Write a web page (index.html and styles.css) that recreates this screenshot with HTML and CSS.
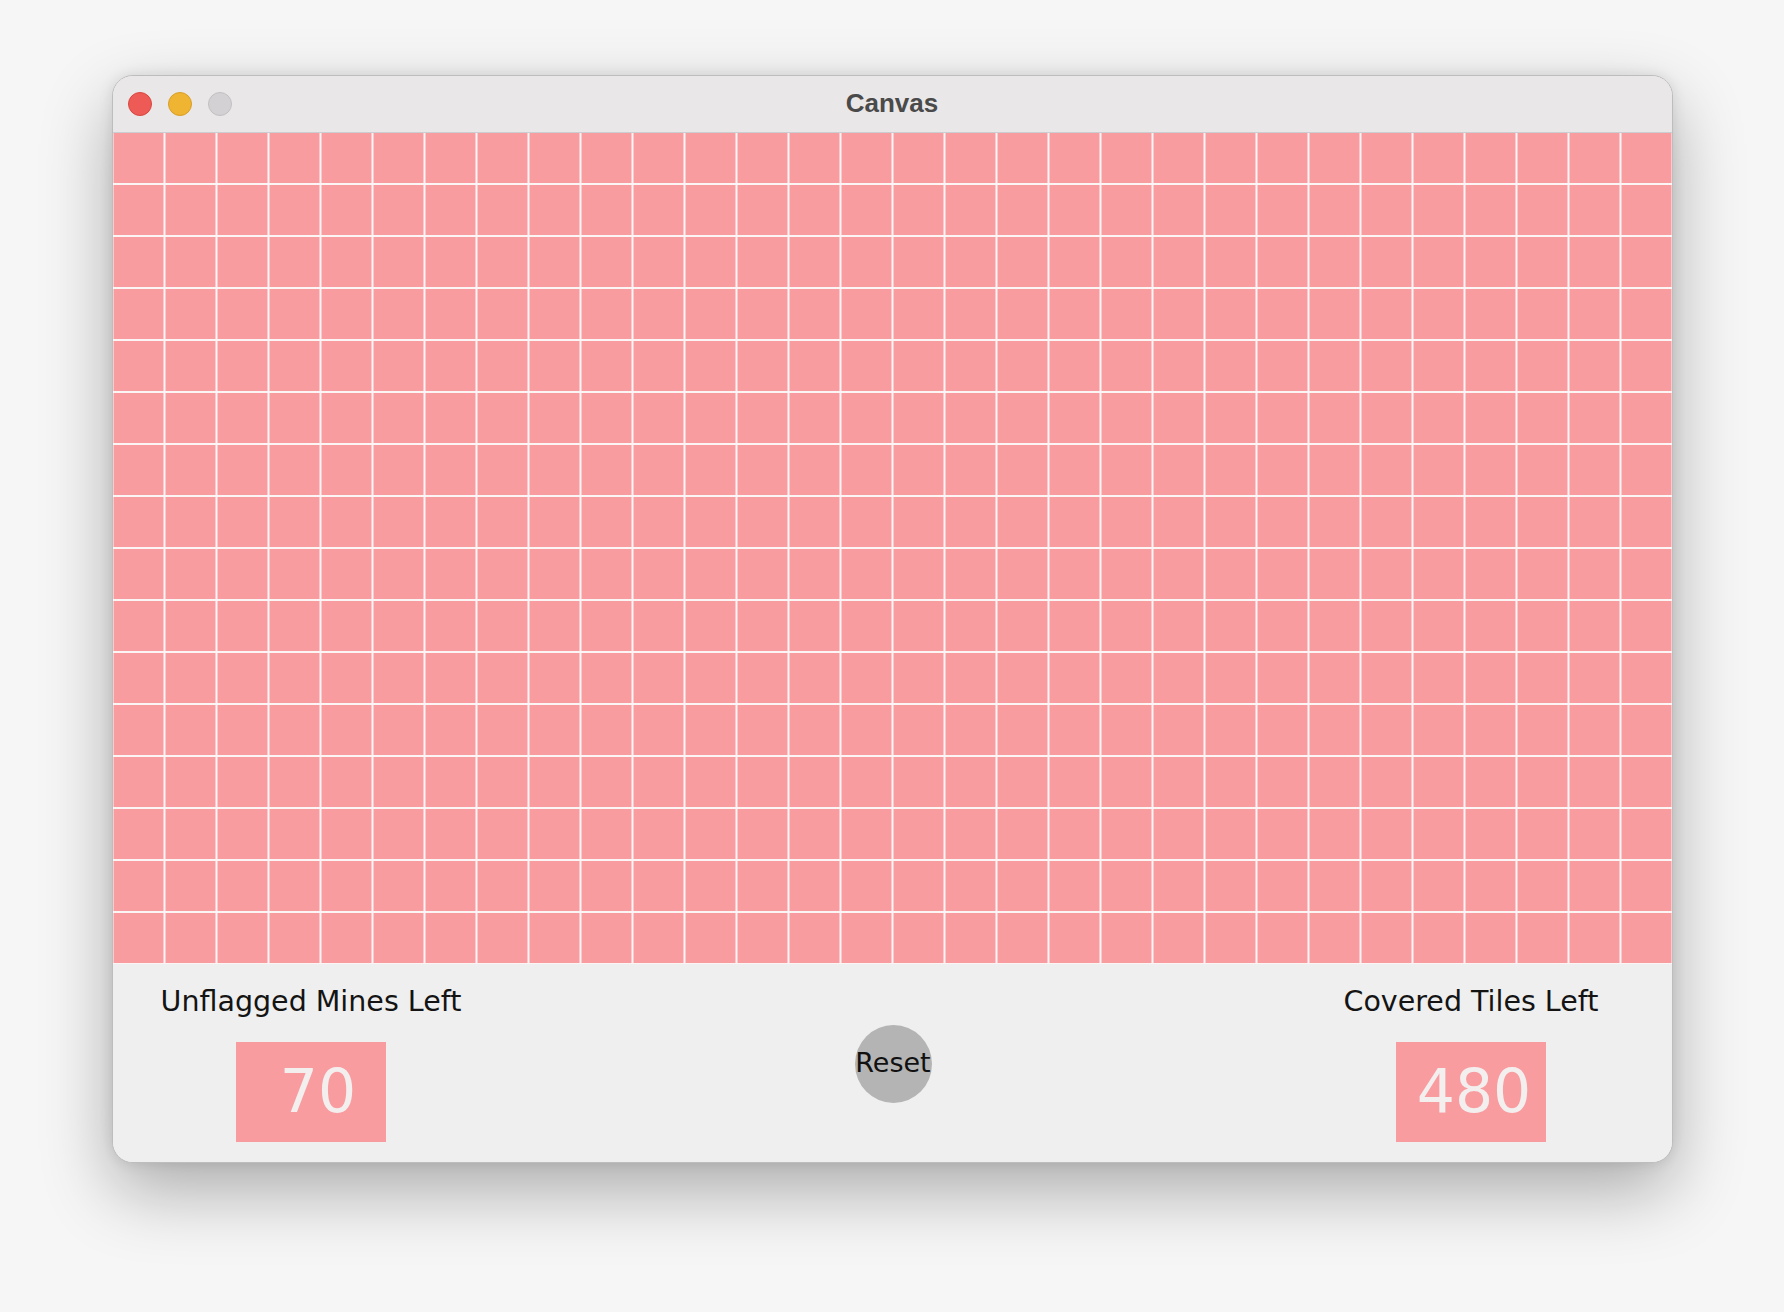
FILE: index.html
```html
<!DOCTYPE html>
<html>
<head>
<meta charset="utf-8">
<title>Canvas</title>
<link rel="stylesheet" href="styles.css">
</head>
<body>
<div class="desktop">
  <div class="window">
    <div class="titlebar">
      <div class="lights">
        <span class="light red"></span>
        <span class="light yellow"></span>
        <span class="light gray"></span>
      </div>
      <div class="title">Canvas</div>
      <div class="spacer"></div>
    </div>
    <div class="board"></div>
    <div class="panel">
      <div class="stat stat-left">
        <div class="label">Unflagged Mines Left</div>
        <div class="count count-mines">70</div>
      </div>
      <div class="middle">
        <button class="reset">Reset</button>
      </div>
      <div class="stat stat-right">
        <div class="label">Covered Tiles Left</div>
        <div class="count">480</div>
      </div>
    </div>
  </div>
</div>
</body>
</html>
```

FILE: styles.css
```css
html, body {
  margin: 0;
  padding: 0;
  background: #f6f6f6;
}
.desktop {
  width: 1784px;
  height: 1312px;
  padding: 75px 0 0 112px;
  box-sizing: border-box;
  display: flex;
  align-items: flex-start;
}
.window {
  width: 1561px;
  box-sizing: border-box;
  border: 1px solid #bdbdbd;
  border-radius: 21px;
  overflow: hidden;
  background: #efefef;
  box-shadow: 0 28px 70px rgba(0,0,0,0.30), 0 0 14px rgba(0,0,0,0.10);
  display: flex;
  flex-direction: column;
}
.titlebar {
  height: 56px;
  background: #e9e7e8;
  border-bottom: 1px solid #c9ced1;
  display: grid;
  grid-template-columns: 1fr auto 1fr;
  align-items: center;
}
.lights {
  display: flex;
  gap: 16px;
  padding-left: 15px;
}
.light {
  width: 24px;
  height: 24px;
  border-radius: 50%;
  box-sizing: border-box;
}
.red { background: #ee5a55; border: 1px solid #d9463f; }
.yellow { background: #f0b433; border: 1px solid #d89e26; }
.gray { background: #d3d1d3; border: 1px solid #c2c0c2; }
.title {
  font-family: "Liberation Sans", Arial, sans-serif;
  font-weight: bold;
  font-size: 26px;
  color: #4a4a4a;
  padding-right: 1px;
  padding-bottom: 2px;
}
.board {
  height: 831px;
  background:
    linear-gradient(to right, transparent 50.5px, #fbf6f5 50.5px) 0.5px 0 / 52px 52px,
    linear-gradient(to bottom, transparent 50.5px, #fbf6f5 50.5px) 0 0 / 52px 52px,
    #f89ca0;
}
.panel {
  height: 198px;
  display: grid;
  grid-template-columns: 396px 1fr 402px;
  background: #efefef;
}
.stat {
  display: flex;
  flex-direction: column;
  align-items: center;
  padding-top: 22px;
}
.label {
  font-family: "DejaVu Sans", Verdana, sans-serif;
  font-size: 28.5px;
  line-height: 32px;
  color: #141414;
  white-space: nowrap;
}
.count {
  margin-top: 24px;
  width: 150px;
  height: 100px;
  background: #f89ca0;
  color: #f4efef;
  font-family: "DejaVu Sans", Verdana, sans-serif;
  font-size: 60px;
  line-height: 1;
  display: flex;
  align-items: center;
  justify-content: center;
  padding-left: 6px;
  padding-bottom: 2px;
  box-sizing: border-box;
}
.count-mines {
  padding-left: 14px;
}
.middle {
  display: flex;
  justify-content: center;
  align-items: flex-start;
  padding-left: 7px;
}
.reset {
  margin-top: 61px;
  width: 77px;
  height: 78px;
  border-radius: 50%;
  border: none;
  background: #b4b4b4;
  padding: 0 0 4px 0;
  font-family: "DejaVu Sans", Verdana, sans-serif;
  font-size: 27px;
  color: #111;
  display: flex;
  align-items: center;
  justify-content: center;
  overflow: visible;
  white-space: nowrap;
}
```
